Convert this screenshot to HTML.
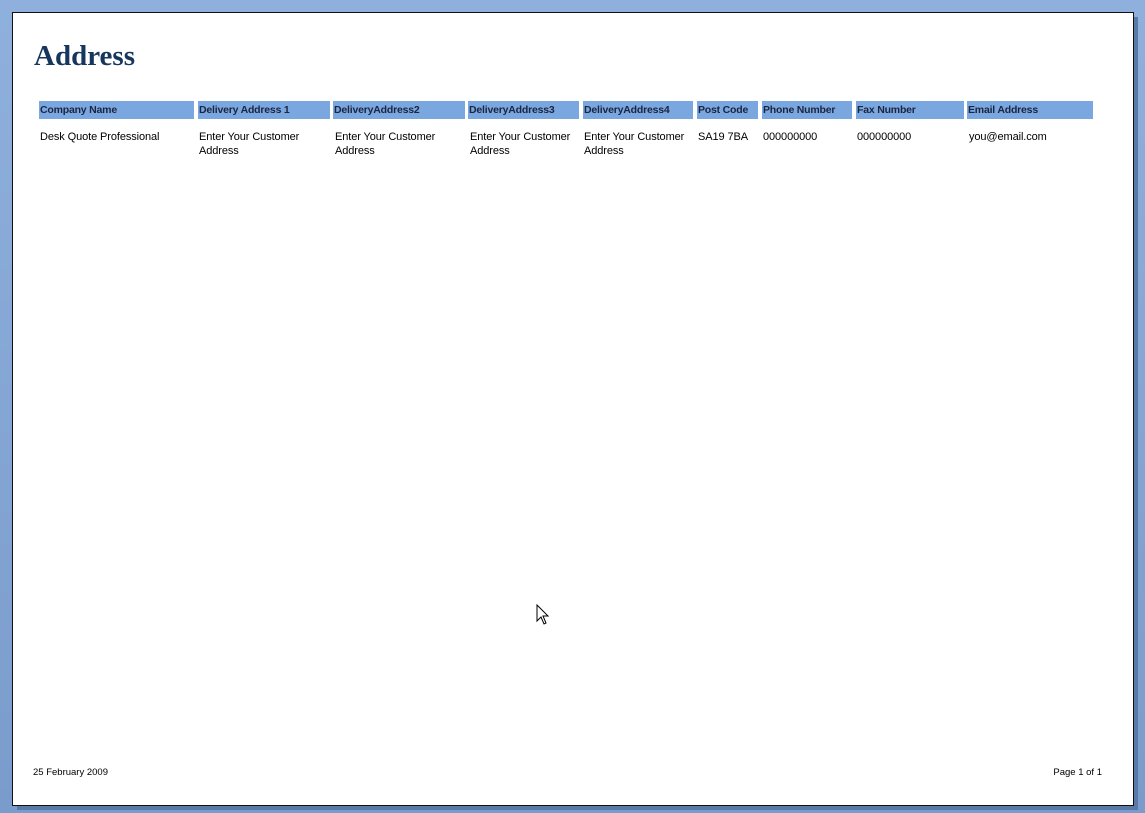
<!DOCTYPE html>
<html><head><style>
body{margin:0;width:1145px;height:813px;background:linear-gradient(180deg,#8fb0dc,#7a9ccc);position:relative;overflow:hidden;font-family:"Liberation Sans",sans-serif}
.shadow{position:absolute;left:17px;top:17px;width:1121px;height:793px;background:#5a78a8}
.page{position:absolute;left:12px;top:12px;width:1120px;height:792px;background:#fff;border:1px solid #111}
h1{position:absolute;left:21px;top:27px;margin:0;font:bold 29px "Liberation Serif",serif;color:#17365d}
.h,.c{position:absolute;font-size:11px;color:#000;letter-spacing:-0.1px;line-height:14px}
.h{top:88px;height:18px;line-height:18px;background:#7ba7e0;font-weight:bold;font-size:10.5px;letter-spacing:-0.2px;color:#1a2540;padding-left:1px;box-sizing:border-box}
.c{top:117px}
.f{position:absolute;top:754px;font-size:9.5px;color:#000}
</style></head><body>
<div class="shadow"></div>
<div class="page">
<h1>Address</h1>
<div class="h" style="left:26px;width:155px">Company Name</div>
<div class="h" style="left:185px;width:132px">Delivery Address 1</div>
<div class="h" style="left:320px;width:132px">DeliveryAddress2</div>
<div class="h" style="left:455px;width:111px">DeliveryAddress3</div>
<div class="h" style="left:570px;width:110px">DeliveryAddress4</div>
<div class="h" style="left:684px;width:61px">Post Code</div>
<div class="h" style="left:749px;width:90px">Phone Number</div>
<div class="h" style="left:843px;width:108px">Fax Number</div>
<div class="h" style="left:954px;width:126px">Email Address</div>
<div class="c" style="left:27px">Desk Quote Professional</div>
<div class="c" style="left:186px;width:125px">Enter Your Customer<br>Address</div>
<div class="c" style="left:322px">Enter Your Customer<br>Address</div>
<div class="c" style="left:457px">Enter Your Customer<br>Address</div>
<div class="c" style="left:571px">Enter Your Customer<br>Address</div>
<div class="c" style="left:685px">SA19 7BA</div>
<div class="c" style="left:750px">000000000</div>
<div class="c" style="left:844px">000000000</div>
<div class="c" style="left:956px">you@email.com</div>
<div class="f" style="left:20px">25 February 2009</div>
<div class="f" style="right:31px">Page 1 of 1</div>
<svg style="position:absolute;left:523px;top:591px" width="14" height="22" viewBox="0 0 14 22"><path d="M1 1 L1 17 L5 13 L8 20 L10 19 L7 12 L12 12 Z" fill="#fff" stroke="#000" stroke-width="1"/></svg>
</div>
</body></html>
